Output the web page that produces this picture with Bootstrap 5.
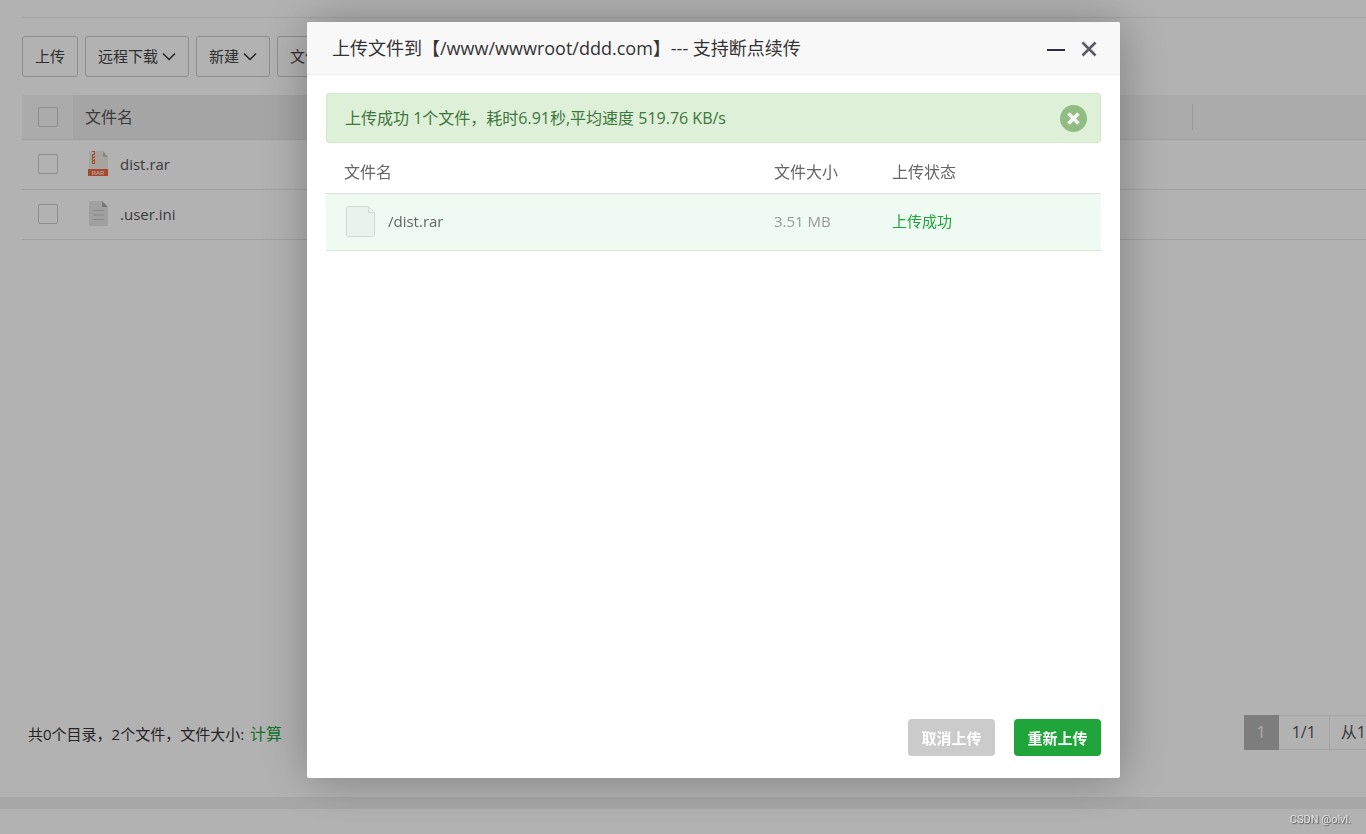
<!DOCTYPE html>
<html lang="zh-CN">
<head>
<meta charset="utf-8">
<meta name="viewport" content="width=device-width, initial-scale=1">
<title>上传文件</title>
<link href="https://cdn.jsdelivr.net/npm/bootstrap@5.3.0/dist/css/bootstrap.min.css" rel="stylesheet">
<style>
  body { font-family: "Open Sans", "Noto Sans CJK SC", sans-serif; font-size: 15px; color: #333; overflow: hidden; }
  .page-main { padding: 17px 0 47px 22px; }
  .toolbar { gap: 7px; border-top: 1px solid #eaeaea; padding: 18px 0; }
  .tool-btn { height: 41px; padding: 0 12px; font-size: 15px; color: #444; border: 1px solid #ccc; border-radius: 3px; gap: 4px; }
  .file-table { table-layout: fixed; --bs-table-bg: transparent; border-color: #e6e6e6; }
  .file-table th, .file-table td { height: 50px; padding: 0 12px; border-bottom: 1px solid #e6e6e6; font-size: 15px; color: #555; vertical-align: middle; }
  .file-table thead th { height: 44px; background: #f5f5f5; font-size: 16px; font-weight: 400; }
  .file-table thead th.sorted { background: #ededed; }
  .col-check { width: 51px; }
  .col-tools { width: 255px; }
  .col-last { width: 174px; }
  .file-table .form-check-input { width: 20px; height: 20px; margin: 0 0 0 4px; border: 1px solid #ccc; border-radius: 2px; display: block; background-color: transparent; }
  .tick { border-left: 1px solid #dcdcdc; height: 26px; display: block; margin-left: -12px; }
  .file-cell { gap: 11px; padding-left: 3px; }
  .status-text { padding: 2px 0 0 6px; }
  .status-text a { margin-left: 2px; color: #20a53a; font-size: 16px; }
  .pager .page-link { height: 35px; padding: 0 13px; line-height: 33px; font-size: 16px; color: #555; border: 1px solid #ececec; white-space: nowrap; }
  .pager .page-item .page-link { border-radius: 0; }
  .pager .active .page-link { padding: 0 12px; background: #b4b4b4; border-color: #b4b4b4; color: #f5f5f5; }
  .pager .page-item:last-child .page-link { padding: 0 0 0 11px; border-right: 0; }
  .divider-strip { height: 12px; background: #f0f0f0; }
  .page-foot { height: 25px; }

  .modal-backdrop { --bs-backdrop-opacity: .3; }
  .upload-modal { padding-left: 61px; overflow: hidden; }
  .upload-modal .modal-dialog { max-width: 813px; margin: 22px auto 56px; }
  .upload-modal .modal-content { min-height: calc(100vh - 78px); border: 0; border-radius: 2px; box-shadow: 1px 1px 50px rgba(0,0,0,.3); }
  .upload-modal .modal-header { height: 53px; padding: 0 23px 0 25px; background: #f8f8f8; border-bottom: 1px solid #eee; border-radius: 2px 2px 0 0; }
  .upload-modal .modal-title { font-size: 18px; line-height: 24px; font-weight: 400; color: #333; }
  .upload-modal .modal-body { padding: 18px 19px; }
  .icon-btn { border: 0; padding: 0; background: none; line-height: 0; }
  .modal-header .icon-btn { padding-top: 2px; }
  .upload-alert { height: 50px; margin: 0; padding: 0 13px 0 18px; background: #dff0d8; border: 1px solid #d0e9c6; border-radius: 3px; color: #3c763d; font-size: 16px; }
  .upload-table { --bs-table-bg: transparent; table-layout: fixed; }
  .upload-table th { height: 50px; padding: 8px 18px 0; font-size: 16px; font-weight: 400; color: #666; vertical-align: middle; border-bottom: 1px solid #d9e2dc; }
  .upload-table td { height: 57px; padding: 0 18px; font-size: 15px; vertical-align: middle; background: #effaf2; border-bottom: 1px solid #d9e2dc; }
  .upload-table .cell-name { color: #666; }
  .upload-table .cell-size { color: #999; }
  .upload-table .cell-state { color: #20a53a; }
  .col-size { width: 118px; }
  .col-state { width: 227px; }
  .upload-modal .modal-footer { border: 0; padding: 0 19px 22px; gap: 19px; }
  .foot-btn { width: 87px; height: 37px; margin: 0; padding: 1px 0 0; border: 0; border-radius: 4px; font-size: 15px; font-weight: 700; color: #fff; }
  .upload-modal .modal-footer > * { margin: 0; }
  .foot-btn:hover, .foot-btn:disabled { color: #fff; opacity: 1; }
  .btn-idle, .btn-idle:disabled { background: #cbcbcb; }
  .btn-go, .btn-go:hover { background: #20a53a; }
  .site-mark { z-index: 1080; right: 15px; bottom: 7px; font: 11px/15px Roboto, sans-serif; color: #e2e2e2; text-shadow: 1px 1px 1px #555; }
</style>
</head>
<body>
<div class="d-flex flex-column min-vh-100">
  <main class="page-main flex-grow-1 d-flex flex-column">
    <div class="toolbar d-flex">
      <button type="button" class="btn tool-btn d-flex align-items-center">上传</button>
      <button type="button" class="btn tool-btn d-flex align-items-center">远程下载
        <svg width="14" height="9" viewBox="0 0 14 9" fill="none" stroke="#333" stroke-width="1.5"><path d="M1 1.500 7 7.500l6-6"/></svg></button>
      <button type="button" class="btn tool-btn d-flex align-items-center">新建
        <svg width="14" height="9" viewBox="0 0 14 9" fill="none" stroke="#333" stroke-width="1.5"><path d="M1 1.500 7 7.500l6-6"/></svg></button>
      <button type="button" class="btn tool-btn d-flex align-items-center">文件</button>
    </div>
    <table class="table file-table mb-0">
      <colgroup><col class="col-check"><col><col class="col-tools"><col class="col-last"></colgroup>
      <thead>
        <tr>
          <th><input class="form-check-input" type="checkbox" aria-label="全选"></th>
          <th class="sorted">文件名</th><th></th><th><span class="tick"></span></th>
        </tr>
      </thead>
      <tbody>
        <tr>
          <td><input class="form-check-input" type="checkbox" aria-label="dist.rar"></td>
          <td><div class="file-cell d-flex align-items-center">
            <svg width="21" height="26" viewBox="0 0 21 26"><path d="M1 0h14l5 6v13H1z" fill="#f0ebe6"/><path d="M15 0v6h5z" fill="#c8c4c0"/><path d="M4 .5h3M6.500 1v2M4 3.500h3M4.500 4v2M4 6.500h3M6.500 5v2M4.500 7v2M4 9.500h3M6.500 8v4M4.500 10v2.500M4 12.500h3" stroke="#ed6a3f" stroke-width="1" fill="none"/><path d="M0 18h20v7H0z" fill="#ed6a3f"/><text x="10" y="24" text-anchor="middle" font-family="Liberation Sans" font-size="6" fill="#fff">RAR</text></svg>
            <span>dist.rar</span></div></td><td></td><td></td>
        </tr>
        <tr>
          <td><input class="form-check-input" type="checkbox" aria-label=".user.ini"></td>
          <td><div class="file-cell d-flex align-items-center">
            <svg width="21" height="26" viewBox="0 0 21 26"><path d="M2 0h12l6 6v18l-1 1H2l-1-1V1z" fill="#e6e6e6"/><path d="M14 0v6h6z" fill="#aaa"/><path d="M5 9.500h11M5 14h11M5 18.500h11" stroke="#c4c4c4"/></svg>
            <span>.user.ini</span></div></td><td></td><td></td>
        </tr>
      </tbody>
    </table>
    <div class="d-flex align-items-center justify-content-between mt-auto">
      <div class="status-text">共0个目录，2个文件，文件大小: <a href="#" class="text-decoration-none">计算</a></div>
      <ul class="pagination pager mb-0">
        <li class="page-item active"><a class="page-link" href="#">1</a></li>
        <li class="page-item"><a class="page-link" href="#">1/1</a></li>
        <li class="page-item"><span class="page-link">从1</span></li>
      </ul>
    </div>
  </main>
  <div class="divider-strip"></div>
  <footer class="page-foot"></footer>
</div>

<div class="modal-backdrop show"></div>
<div class="modal upload-modal d-block" tabindex="-1" role="dialog" aria-labelledby="uploadTitle">
  <div class="modal-dialog">
    <div class="modal-content">
      <div class="modal-header d-flex justify-content-between align-items-center">
        <h1 class="modal-title" id="uploadTitle">上传文件到【/www/wwwroot/ddd.com】--- 支持断点续传</h1>
        <div class="d-flex gap-3 align-items-center">
          <button type="button" class="icon-btn" aria-label="最小化"><svg width="18" height="18" viewBox="0 0 18 18"><path d="M0 10h18" stroke="#2d2c3b" stroke-width="2"/></svg></button>
          <button type="button" class="icon-btn" aria-label="关闭"><svg width="16" height="16" viewBox="0 0 16 16"><path d="M1.500 1.500l13 13M14.500 1.500l-13 13" stroke="#5a5965" stroke-width="2.500"/></svg></button>
        </div>
      </div>
      <div class="modal-body">
        <div class="alert upload-alert d-flex align-items-center justify-content-between" role="alert">
          <span>上传成功 1个文件，耗时6.91秒,平均速度 519.76 KB/s</span>
          <button type="button" class="icon-btn" aria-label="关闭提示"><svg width="27" height="27" viewBox="0 0 27 27"><circle cx="13.500" cy="13.500" r="13.500" fill="#91bd83"/><path d="M8.500 8.500l10 10M18.500 8.500l-10 10" stroke="#f5f5f5" stroke-width="3.600"/></svg></button>
        </div>
        <table class="table upload-table mb-0">
          <colgroup><col><col class="col-size"><col class="col-state"></colgroup>
          <thead><tr><th>文件名</th><th>文件大小</th><th>上传状态</th></tr></thead>
          <tbody>
            <tr>
              <td class="cell-name"><div class="d-flex align-items-center gap-2">
                <svg width="36" height="34" viewBox="0 0 36 34" fill="#e8f3eb" stroke="#cfdcd2"><path d="M3.500 1.500h21l6 6v23l-1 1h-26l-1-1v-28z"/><path d="M24.500 1.500v6h6"/></svg>
                <span>/dist.rar</span></div></td>
              <td class="cell-size">3.51 MB</td>
              <td class="cell-state">上传成功</td>
            </tr>
          </tbody>
        </table>
      </div>
      <div class="modal-footer">
        <button type="button" class="btn foot-btn btn-idle" disabled>取消上传</button>
        <button type="button" class="btn foot-btn btn-go">重新上传</button>
      </div>
    </div>
  </div>
</div>
<div class="site-mark position-fixed">CSDN @olvl.</div>
<script src="https://cdn.jsdelivr.net/npm/bootstrap@5.3.0/dist/js/bootstrap.bundle.min.js"></script>
</body>
</html>
